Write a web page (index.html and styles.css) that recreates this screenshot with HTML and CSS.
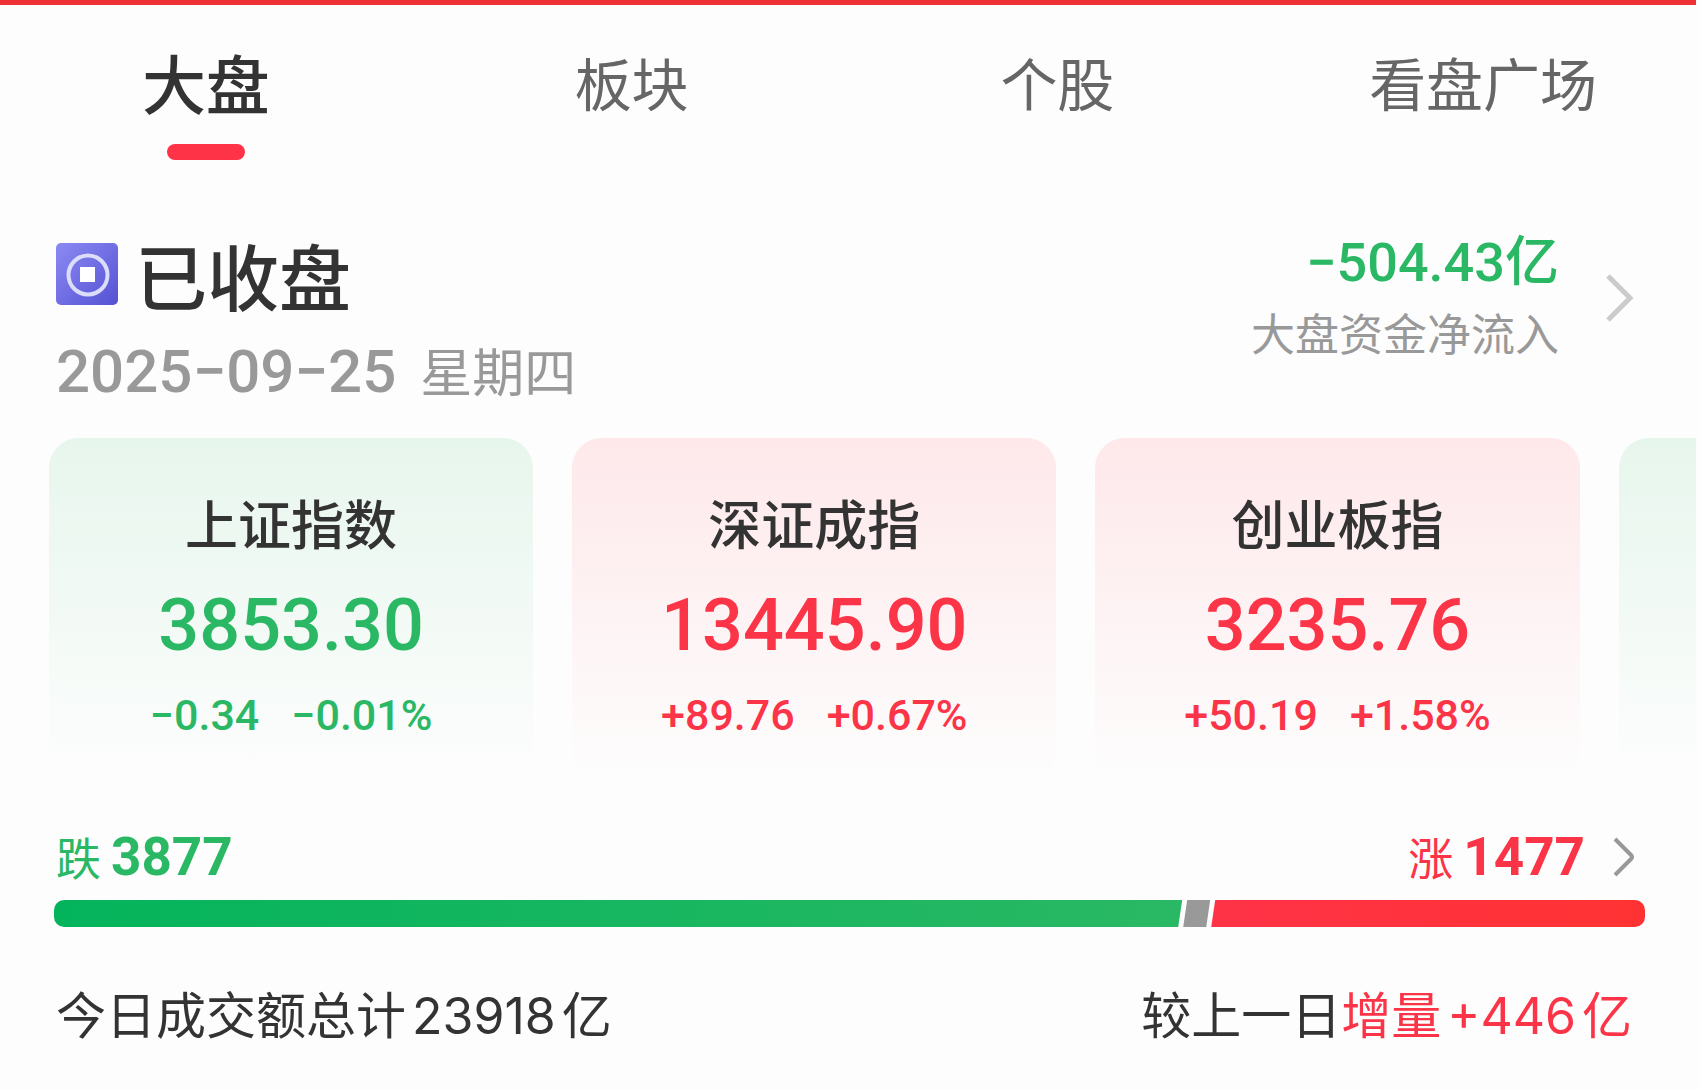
FILE: index.html
```html
<!DOCTYPE html>
<html lang="zh-CN">
<head>
    <meta charset="UTF-8">
    <meta name="viewport" content="width=device-width, initial-scale=1.0">
    <title>大盘</title>
    <link rel="stylesheet" href="styles.css">
</head>
<body>

<div class="page">
    <nav class="tabs">
        <a class="tab active" href="#">大盘</a>
        <a class="tab" href="#">板块</a>
        <a class="tab" href="#">个股</a>
        <a class="tab" href="#">看盘广场</a>
    </nav>

    <section class="status">
        <div class="status-left">
            <h1 class="status-title">
                <svg class="status-icon" viewBox="0 0 62 62" aria-hidden="true">
                    <defs>
                        <linearGradient id="iconBg" x1="0" y1="0" x2="1" y2="1">
                            <stop offset="0" stop-color="#8b8bf3"/>
                            <stop offset="1" stop-color="#5551d3"/>
                        </linearGradient>
                    </defs>
                    <rect width="62" height="62" rx="5" fill="url(#iconBg)"/>
                    <circle cx="32" cy="32" r="19.5" fill="none" stroke="#dcdcfb" stroke-width="4"/>
                    <rect x="24" y="24" width="15" height="15" fill="#fff"/>
                </svg>
                已收盘
            </h1>
            <p class="date"><span class="date-num">2025−09−25</span><span class="weekday">星期四</span></p>
        </div>
        <a class="flow" href="#">
            <span class="flow-text">
                <span class="flow-num down">−504.43亿</span>
                <span class="flow-label">大盘资金净流入</span>
            </span>
            <svg class="flow-arrow" viewBox="0 0 28 48" aria-hidden="true"><path d="M2 2 L24 24 L2 46" fill="none" stroke="#cbcbcb" stroke-width="5"/></svg>
        </a>
    </section>

    <section class="cards">
        <div class="card card-down">
            <h2 class="card-name">上证指数</h2>
            <p class="card-price">3853.30</p>
            <p class="card-change"><span>−0.34</span><span>−0.01%</span></p>
        </div>
        <div class="card card-up">
            <h2 class="card-name">深证成指</h2>
            <p class="card-price">13445.90</p>
            <p class="card-change"><span>+89.76</span><span>+0.67%</span></p>
        </div>
        <div class="card card-up">
            <h2 class="card-name">创业板指</h2>
            <p class="card-price">3235.76</p>
            <p class="card-change"><span>+50.19</span><span>+1.58%</span></p>
        </div>
        <div class="card card-down"></div>
    </section>

    <section class="breadth">
        <div class="breadth-head">
            <span class="breadth-item down">跌<b>3877</b></span>
            <a class="breadth-item up" href="#">涨<b>1477</b>
                <svg class="breadth-arrow" viewBox="0 0 22 40" aria-hidden="true"><path d="M2 2 L18 18 Q20 20 18 22 L2 38" fill="none" stroke="#999" stroke-width="4"/></svg>
            </a>
        </div>
        <div class="bar">
            <div class="bar-down" style="width: 71%"></div>
            <div class="bar-flat" style="width: 1.7%"></div>
            <div class="bar-up" style="width: 27.3%"></div>
        </div>
    </section>

    <section class="turnover">
        <p>今日成交额总计<span class="num">23918</span>亿</p>
        <p>较上一日<span class="up">增量<span class="num">+446</span>亿</span></p>
    </section>
</div>

</body>
</html>
```
FILE: styles.css
```css
body {
    margin: 0;
    background-color: #fdfdfd;
    color: #333;
    font-family: "Noto Sans CJK SC", sans-serif;
}
h1, h2, p {
    margin: 0;
    font-weight: 500;
}
a {
    color: inherit;
    text-decoration: none;
}
.page {
    margin-right: 4px;
    border-top: 5px solid #ee3135;
    overflow: hidden;
}
.down {
    color: #2ab864;
}
.up {
    color: #fb3447;
}

/* tabs */
.tabs {
    display: grid;
    grid-template-columns: repeat(4, 1fr);
    margin-left: -7px;
    padding-top: 36px;
}
.tab {
    display: flex;
    flex-direction: column;
    align-items: center;
    font-size: 57px;
    line-height: 80px;
    color: #666;
}
.tab.active {
    font-size: 64px;
    font-weight: 500;
    color: #333;
}
.tab.active::after {
    content: "";
    width: 78px;
    height: 16px;
    margin-top: 23px;
    border-radius: 8px;
    background-color: #ff3347;
}

/* market status */
.status {
    display: flex;
    justify-content: space-between;
    align-items: flex-start;
    margin-top: 63px;
    padding: 0 62px 0 56px;
}
.status-left {
    padding-top: 11px;
}
.status-title {
    display: flex;
    align-items: center;
    gap: 17px;
    font-size: 72px;
    line-height: 80px;
}
.status-icon {
    width: 62px;
    height: 62px;
}
.date {
    display: flex;
    align-items: baseline;
    gap: 24px;
    margin-top: 20px;
    line-height: 72px;
    color: #999;
}
.date-num {
    font-family: Roboto, "Noto Sans CJK SC", sans-serif;
    font-size: 60px;
    font-weight: 500;
}
.weekday {
    font-size: 52px;
    font-weight: 400;
}
.flow {
    display: flex;
    align-items: center;
    gap: 47px;
    padding-top: 4px;
}
.flow-text {
    display: flex;
    flex-direction: column;
    align-items: flex-end;
    gap: 5px;
}
.flow-num {
    font-family: Roboto, "Noto Sans CJK SC", sans-serif;
    font-size: 54px;
    font-weight: 500;
    line-height: 72px;
}
.flow-label {
    font-size: 44px;
    line-height: 56px;
    color: #999;
}
.flow-arrow {
    width: 28px;
    height: 48px;
    margin-top: 8px;
}

/* index cards */
.cards {
    display: flex;
    gap: 39px;
    margin-top: 30px;
    padding-left: 49px;
}
.card {
    flex: 0 0 29.4%;
    box-sizing: border-box;
    padding: 48px 0 37px;
    border-radius: 30px;
    text-align: center;
}
.card-down {
    background: linear-gradient(#e7f6ed, #fdfdfd);
    color: #2ab864;
}
.card-up {
    background: linear-gradient(#fee8ea, #fdfdfd);
    color: #fb3447;
}
.card-name {
    font-size: 53px;
    line-height: 72px;
    color: #333;
}
.card-price {
    margin-top: 24px;
    font-family: Roboto, sans-serif;
    font-size: 72px;
    line-height: 88px;
}
.card-change {
    display: flex;
    justify-content: center;
    gap: 32px;
    margin-top: 17px;
    font-family: Roboto, sans-serif;
    font-size: 43px;
    line-height: 56px;
}

/* advance / decline */
.breadth {
    margin-top: 45px;
    padding: 0 51px 0 54px;
}
.breadth-head {
    display: flex;
    justify-content: space-between;
    padding: 0 10px 0 2px;
}
.breadth-item {
    display: flex;
    align-items: center;
    gap: 10px;
    font-size: 45px;
    line-height: 64px;
}
.breadth-item b {
    font-family: Roboto, sans-serif;
    font-size: 53px;
}
.breadth-arrow {
    width: 22px;
    height: 40px;
    margin-left: 18px;
}
.bar {
    display: flex;
    gap: 1px;
    height: 27px;
    margin-top: 11px;
    border-radius: 10px;
    overflow: hidden;
}
.bar-down {
    background: linear-gradient(to right, #04b45c, #2ab864);
    clip-path: polygon(0 0, 100% 0, calc(100% - 4px) 100%, 0 100%);
}
.bar-flat {
    background-color: #999;
    clip-path: polygon(4px 0, 100% 0, calc(100% - 4px) 100%, 0 100%);
}
.bar-up {
    background: linear-gradient(to right, #ff3347, #ff3233);
    clip-path: polygon(4px 0, 100% 0, 100% 100%, 0 100%);
}

/* turnover */
.turnover {
    display: flex;
    justify-content: space-between;
    margin-top: 49px;
    padding: 0 64px 0 56px;
    font-size: 50px;
    line-height: 72px;
}
.turnover p {
    font-weight: 400;
}
.turnover .num {
    margin: 0 6px;
    font-family: Inter, "Noto Sans CJK SC", sans-serif;
}
```
